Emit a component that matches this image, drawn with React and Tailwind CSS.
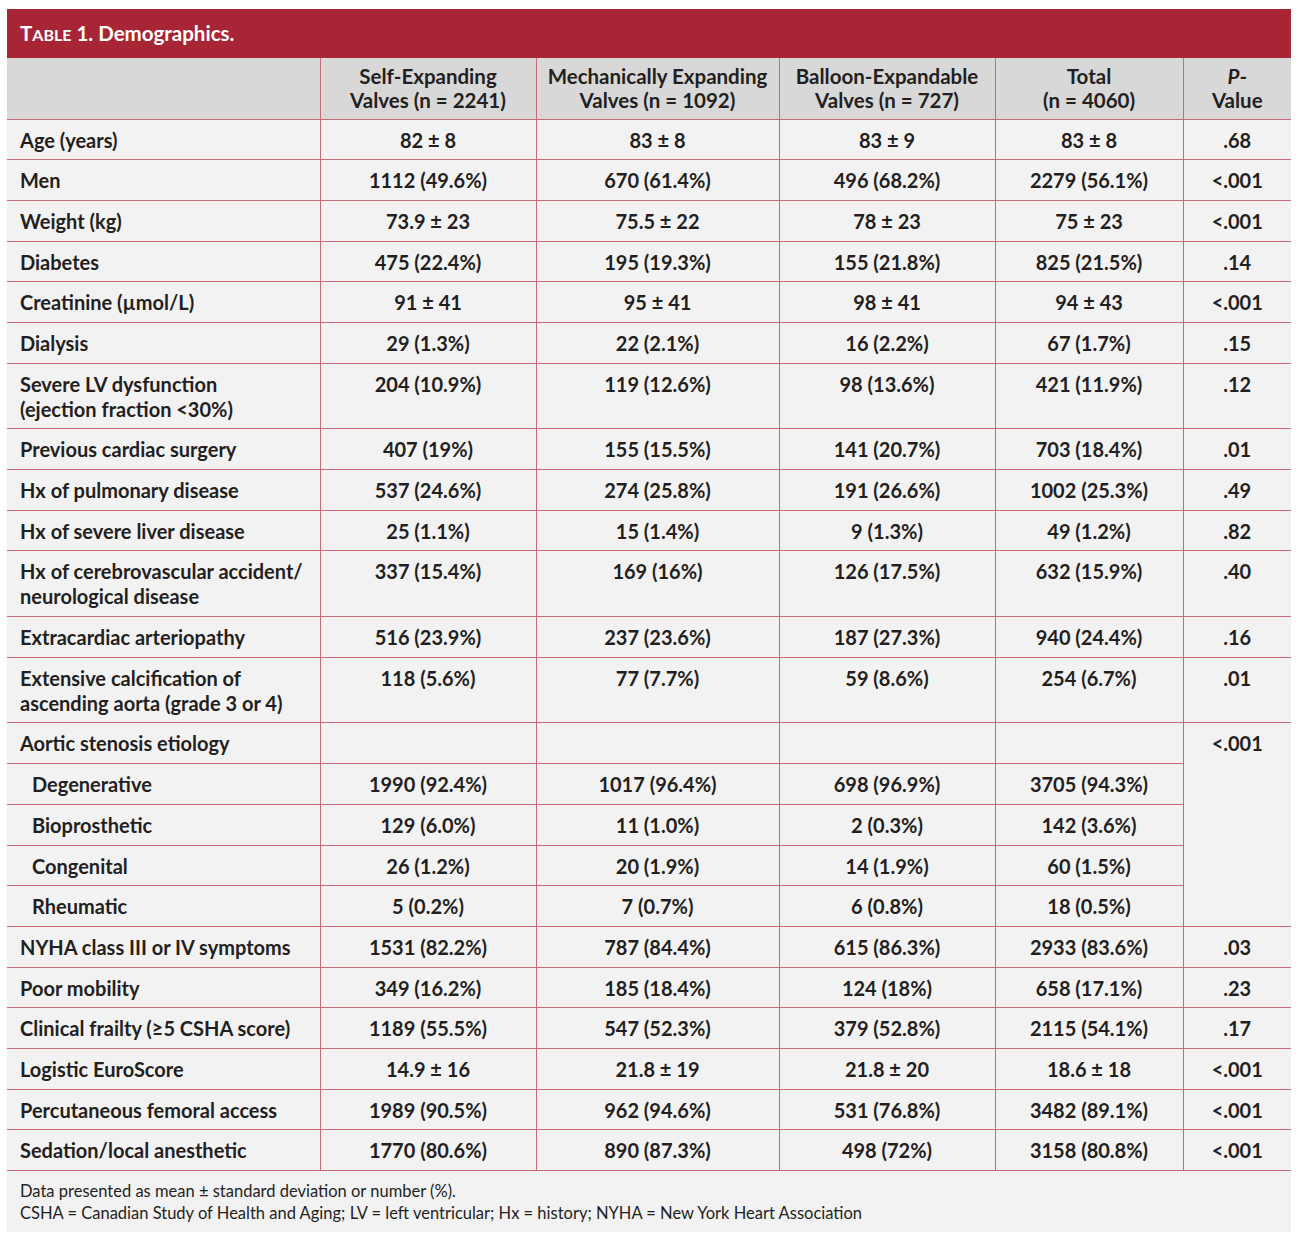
import React from "react";

const rows = [
  { label: "Age (years)", v: ["82 ± 8", "83 ± 8", "83 ± 9", "83 ± 8"], p: ".68" },
  { label: "Men", v: ["1112 (49.6%)", "670 (61.4%)", "496 (68.2%)", "2279 (56.1%)"], p: "<.001" },
  { label: "Weight (kg)", v: ["73.9 ± 23", "75.5 ± 22", "78 ± 23", "75 ± 23"], p: "<.001" },
  { label: "Diabetes", v: ["475 (22.4%)", "195 (19.3%)", "155 (21.8%)", "825 (21.5%)"], p: ".14" },
  { label: "Creatinine (µmol/L)", v: ["91 ± 41", "95 ± 41", "98 ± 41", "94 ± 43"], p: "<.001" },
  { label: "Dialysis", v: ["29 (1.3%)", "22 (2.1%)", "16 (2.2%)", "67 (1.7%)"], p: ".15" },
  { label: ["Severe LV dysfunction", "(ejection fraction <30%)"], v: ["204 (10.9%)", "119 (12.6%)", "98 (13.6%)", "421 (11.9%)"], p: ".12" },
  { label: "Previous cardiac surgery", v: ["407 (19%)", "155 (15.5%)", "141 (20.7%)", "703 (18.4%)"], p: ".01" },
  { label: "Hx of pulmonary disease", v: ["537 (24.6%)", "274 (25.8%)", "191 (26.6%)", "1002 (25.3%)"], p: ".49" },
  { label: "Hx of severe liver disease", v: ["25 (1.1%)", "15 (1.4%)", "9 (1.3%)", "49 (1.2%)"], p: ".82" },
  { label: ["Hx of cerebrovascular accident/", "neurological disease"], v: ["337 (15.4%)", "169 (16%)", "126 (17.5%)", "632 (15.9%)"], p: ".40" },
  { label: "Extracardiac arteriopathy", v: ["516 (23.9%)", "237 (23.6%)", "187 (27.3%)", "940 (24.4%)"], p: ".16" },
  { label: ["Extensive calcification of", "ascending aorta (grade 3 or 4)"], v: ["118 (5.6%)", "77 (7.7%)", "59 (8.6%)", "254 (6.7%)"], p: ".01" },
];

const etiology = [
  { label: "Degenerative", v: ["1990 (92.4%)", "1017 (96.4%)", "698 (96.9%)", "3705 (94.3%)"] },
  { label: "Bioprosthetic", v: ["129 (6.0%)", "11 (1.0%)", "2 (0.3%)", "142 (3.6%)"] },
  { label: "Congenital", v: ["26 (1.2%)", "20 (1.9%)", "14 (1.9%)", "60 (1.5%)"] },
  { label: "Rheumatic", v: ["5 (0.2%)", "7 (0.7%)", "6 (0.8%)", "18 (0.5%)"] },
];

const rows2 = [
  { label: "NYHA class III or IV symptoms", v: ["1531 (82.2%)", "787 (84.4%)", "615 (86.3%)", "2933 (83.6%)"], p: ".03" },
  { label: "Poor mobility", v: ["349 (16.2%)", "185 (18.4%)", "124 (18%)", "658 (17.1%)"], p: ".23" },
  { label: "Clinical frailty (≥5 CSHA score)", v: ["1189 (55.5%)", "547 (52.3%)", "379 (52.8%)", "2115 (54.1%)"], p: ".17" },
  { label: "Logistic EuroScore", v: ["14.9 ± 16", "21.8 ± 19", "21.8 ± 20", "18.6 ± 18"], p: "<.001" },
  { label: "Percutaneous femoral access", v: ["1989 (90.5%)", "962 (94.6%)", "531 (76.8%)", "3482 (89.1%)"], p: "<.001" },
  { label: "Sedation/local anesthetic", v: ["1770 (80.6%)", "890 (87.3%)", "498 (72%)", "3158 (80.8%)"], p: "<.001" },
];

const cell = "border border-[#c66a78] pt-[8px] pb-[6.7px] leading-[25px] align-top";
const dcell = cell + " text-center";

function Label({ label }) {
  if (Array.isArray(label)) {
    return (
      <>
        {label[0]}
        <br />
        {label[1]}
      </>
    );
  }
  return label;
}

function Row({ r }) {
  return (
    <tr>
      <td className={cell + " pl-[13px] border-l-0"}>
        <Label label={r.label} />
      </td>
      {r.v.map((x, i) => (
        <td key={i} className={dcell}>
          {x}
        </td>
      ))}
      <td className={dcell + " border-r-0"}>{r.p}</td>
    </tr>
  );
}

const th = "border border-[#c66a78] border-t-0 font-bold leading-[24px] text-center text-[20.5px]";

export default function App() {
  return (
    <div className="bg-white min-h-[1243px] pt-[9px] pl-[7px]">
      <div
        className="w-[1284px] bg-[#f3f2f3] text-[#231f20]"
        style={{ fontFamily: "Lato, 'Open Sans', sans-serif" }}
      >
        <div className="h-[49px] bg-[#a72535] flex items-center pl-[13px] text-white font-bold text-[20.5px]">
          <span>
            T<span className="text-[16px]">ABLE</span> 1. Demographics.
          </span>
        </div>
        <table className="w-full table-fixed border-collapse text-[20px] font-bold">
          <colgroup>
            <col className="w-[313px]" />
            <col className="w-[216px]" />
            <col className="w-[243px]" />
            <col className="w-[216px]" />
            <col className="w-[188px]" />
            <col className="w-[108px]" />
          </colgroup>
          <thead>
            <tr className="bg-[#d9d8d9] h-[61px]">
              <th className={th + " border-l-0"}></th>
              <th className={th}>
                Self-Expanding
                <br />
                Valves (n = 2241)
              </th>
              <th className={th}>
                Mechanically Expanding
                <br />
                Valves (n = 1092)
              </th>
              <th className={th}>
                Balloon-Expandable
                <br />
                Valves (n = 727)
              </th>
              <th className={th}>
                Total
                <br />
                (n = 4060)
              </th>
              <th className={th + " border-r-0"}>
                <i>P</i>-
                <br />
                Value
              </th>
            </tr>
          </thead>
          <tbody>
            {rows.map((r, i) => (
              <Row key={i} r={r} />
            ))}
            <tr>
              <td className={cell + " pl-[13px] border-l-0"}>Aortic stenosis etiology</td>
              <td className={cell}></td>
              <td className={cell}></td>
              <td className={cell}></td>
              <td className={cell}></td>
              <td rowSpan={5} className={dcell + " border-r-0 pt-[6px]"}>
                &lt;.001
              </td>
            </tr>
            {etiology.map((r, i) => (
              <tr key={i}>
                <td className={cell + " pl-[25px] border-l-0"}>{r.label}</td>
                {r.v.map((x, j) => (
                  <td key={j} className={dcell}>
                    {x}
                  </td>
                ))}
              </tr>
            ))}
            {rows2.map((r, i) => (
              <Row key={i} r={r} />
            ))}
          </tbody>
        </table>
        <div className="h-[61px] pl-[13px] pt-[9px] text-[16.5px] leading-[22px]">
          <div>Data presented as mean ± standard deviation or number (%).</div>
          <div>CSHA = Canadian Study of Health and Aging; LV = left ventricular; Hx = history; NYHA = New York Heart Association</div>
        </div>
      </div>
    </div>
  );
}
